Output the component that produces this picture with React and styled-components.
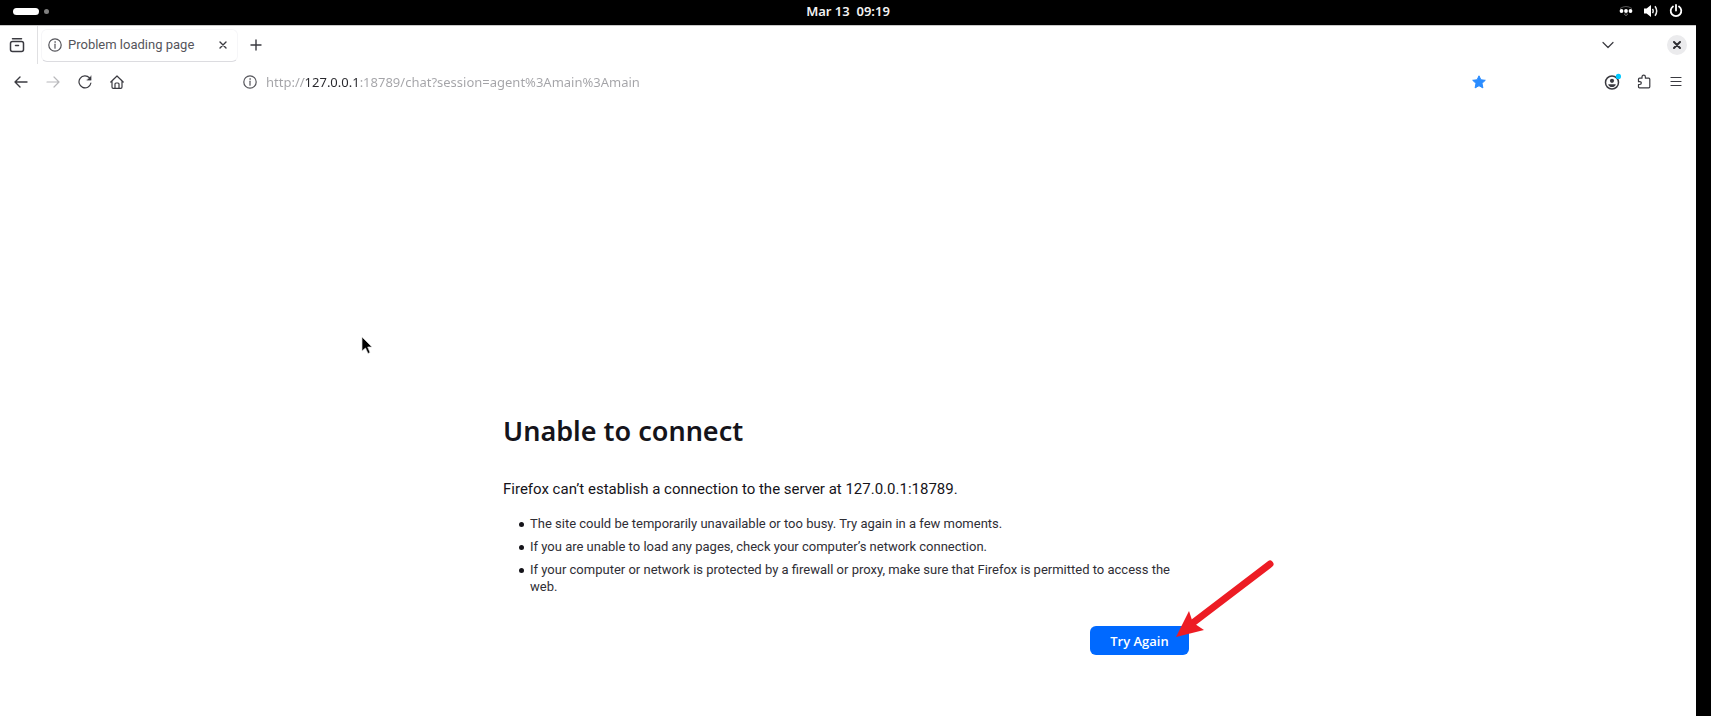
import styled, { createGlobalStyle } from "styled-components";

const GlobalStyle = createGlobalStyle`
  * {
    box-sizing: border-box;
  }

  html,
  body,
  #root {
    height: 100%;
  }

  body {
    margin: 0;
    background: #000;
    color: #15141a;
    font-family: Roboto, "Noto Sans", sans-serif;
    overflow: hidden;
  }
`;

const Desktop = styled.div`
  display: flex;
  flex-direction: column;
  min-height: 100%;
`;

const TopBar = styled.header`
  display: grid;
  grid-template-columns: 1fr auto 1fr;
  align-items: center;
  height: 25px;
  padding: 0 28px 3px 13px;
  background: #000;
  color: #f2f2f2;
`;

const Workspaces = styled.div`
  display: flex;
  align-items: center;
  gap: 5px;
`;

const Workspace = styled.button`
  width: ${({ $active }) => ($active ? "26px" : "5px")};
  height: ${({ $active }) => ($active ? "7px" : "5px")};
  padding: 0;
  border: none;
  border-radius: 4px;
  background: ${({ $active }) => ($active ? "#fff" : "#808080")};
`;

const Clock = styled.time`
  font-family: "Noto Sans", sans-serif;
  font-size: 13px;
  font-weight: 600;
  line-height: 18px;
  white-space: pre;
`;

const Tray = styled.div`
  display: flex;
  align-items: center;
  justify-content: flex-end;
  gap: 10px;

  svg {
    display: block;
  }
`;

const BrowserWindow = styled.div`
  display: flex;
  flex-direction: column;
  flex: 1;
  margin-right: 15px;
  border-top: 1px solid #c8c8c8;
  background: #fff;
`;

const TabStrip = styled.div`
  display: flex;
  align-items: center;
  height: 38px;
  padding-right: 9px;
`;

const IconButton = styled.button`
  display: flex;
  align-items: center;
  justify-content: center;
  flex: none;
  width: ${({ $width }) => $width || "32px"};
  height: 32px;
  padding: 0;
  border: none;
  background: transparent;
  color: ${({ $muted }) => ($muted ? "#b8b8bb" : "#3a3a40")};
`;

const Divider = styled.div`
  width: 1px;
  height: 100%;
  margin: 0 3px 0 3px;
  background: #e0e0e2;
`;

const Tab = styled.div`
  display: flex;
  align-items: center;
  gap: 6px;
  width: 197px;
  height: 33px;
  margin-right: 2px;
  padding-left: 6px;
  border: 1px solid #f6f6f8;
  border-bottom-color: #dcdce0;
  border-radius: 6px;
  color: #55555b;
`;

const TabTitle = styled.span`
  flex: 1;
  font-size: 13px;
  line-height: 18px;
  white-space: nowrap;
`;

const Spacer = styled.div`
  flex: 1;
`;

const CloseWindow = styled.button`
  display: flex;
  align-items: center;
  justify-content: center;
  width: 20px;
  height: 20px;
  margin-left: 43px;
  padding: 0;
  border: none;
  border-radius: 50%;
  background: #ebebed;
  color: #2e2e33;
`;

const Toolbar = styled.div`
  display: flex;
  align-items: center;
  height: 36px;
  padding: 0 4px 0 5px;
`;

const AddressBar = styled.div`
  display: flex;
  align-items: center;
  flex: 1;
  gap: 9px;
  margin: 0 110px;
  color: #55555b;

  svg {
    flex: none;
  }
`;

/* the host part of the address is darker than the rest */
const AddressInput = styled.input`
  flex: 1;
  min-width: 0;
  height: 30px;
  padding: 0;
  border: none;
  outline: none;
  background: linear-gradient(
    to right,
    #a3a3a7 38px,
    #27272c 38px,
    #27272c 91px,
    #a3a3a7 91px
  );
  background-clip: text;
  color: transparent;
  font-family: "Noto Sans", sans-serif;
  font-size: 13px;
`;

const Page = styled.main`
  flex: 1;
  width: 690px;
  max-width: 100%;
  margin: 0 auto;
  padding: 309px 4px 0 0;
`;

const Title = styled.h1`
  margin: 0;
  font-family: "Noto Sans", sans-serif;
  font-size: 27px;
  font-weight: 600;
  line-height: 44px;
`;

const Summary = styled.p`
  margin: 25px 0 15px;
  font-size: 15px;
  line-height: 22px;
`;

const Hints = styled.ul`
  margin: 0;
  padding-left: 16px;
  list-style: none;
  font-size: 13px;
  line-height: 17px;
`;

const Hint = styled.li`
  display: flex;
  gap: 6px;
  margin-bottom: 6px;
  color: #2f2e35;

  &::before {
    content: "";
    flex: none;
    width: 5px;
    height: 5px;
    margin-top: 7px;
    border-radius: 50%;
    background: #15141a;
  }
`;

const Actions = styled.div`
  display: flex;
  justify-content: flex-end;
  margin-top: 31px;
`;

const TryAgain = styled.button`
  position: relative;
  width: 99px;
  height: 29px;
  padding: 0;
  border: none;
  border-radius: 6px;
  background: #0069ff;
  color: #fff;
  font-family: "Open Sans", sans-serif;
  font-size: 13px;
  font-weight: 600;
  line-height: 20px;
`;

/* lies over the button and the page around it */
const Arrow = styled.svg`
  position: absolute;
  left: 84px;
  bottom: 15px;
  pointer-events: none;
`;

const Pointer = styled.svg`
  position: absolute;
  left: 361px;
  top: 336px;
  pointer-events: none;
`;

const line = {
  fill: "none",
  stroke: "currentColor",
  strokeWidth: 1.2,
  strokeLinecap: "round",
  strokeLinejoin: "round",
};

function InfoIcon() {
  return (
    <svg width="14" height="14" viewBox="0 0 14 14" {...line}>
      <circle cx="7" cy="7" r="6.2" />
      <path d="M7 6.2v4" />
      <circle cx="7" cy="4" r=".4" fill="currentColor" strokeWidth=".6" />
    </svg>
  );
}

function CrossIcon({ size, weight }) {
  return (
    <svg width={size} height={size} viewBox="0 0 8 8" {...line} strokeWidth={weight}>
      <path d="M1 1l6 6M7 1l-6 6" />
    </svg>
  );
}

function SystemTray() {
  return (
    <Tray>
      <svg width="14" height="14" viewBox="0 0 14 14">
        <path d="M1 4.5Q7 0.5 13 4.5M5 10h4l-2 2z" fill="none" stroke="#555" />
        <circle cx="2.5" cy="7" r="1.9" fill="#fff" />
        <circle cx="7" cy="7" r="1.9" fill="#fff" />
        <circle cx="11.5" cy="7" r="1.9" fill="#fff" />
      </svg>
      <svg width="16" height="14" viewBox="0 0 16 14">
        <path d="M1 4.5h2.6L8 1v12L3.600 9.500H1z" fill="#fff" />
        <path
          d="M9.5 4.8q1.4 2.2 0 4.4M12 2.3q3.4 4.7 0 9.4"
          fill="none"
          stroke="#eee"
          strokeWidth="1.5"
        />
      </svg>
      <svg width="14" height="14" viewBox="0 0 14 14" fill="none" stroke="#fff" strokeWidth="1.8">
        <path d="M4 2.4A5.3 5.3 0 1 0 10 2.4M7 1v5.5" strokeLinecap="round" />
      </svg>
    </Tray>
  );
}

function Tabs() {
  return (
    <TabStrip>
      <IconButton $width="34px" aria-label="Firefox View">
        <svg width="16" height="16" viewBox="0 0 16 16" {...line} strokeWidth="1.5">
          <rect x="1.5" y="4.5" width="13" height="10" rx="2" />
          <path d="M3.5 1.7h9M6.500 8.500h3" />
        </svg>
      </IconButton>
      <Divider />
      <Tab>
        <InfoIcon />
        <TabTitle>Problem loading page</TabTitle>
        <IconButton $width="28px" aria-label="Close tab">
          <CrossIcon size={8} weight={1.4} />
        </IconButton>
      </Tab>
      <IconButton aria-label="New tab">
        <svg width="12" height="12" viewBox="0 0 12 12" {...line} strokeWidth="1.4">
          <path d="M6 1v10M1 6h10" />
        </svg>
      </IconButton>
      <Spacer />
      <IconButton aria-label="List all tabs">
        <svg width="12" height="12" viewBox="0 0 12 12" {...line}>
          <path d="M1 3.5l5 5 5-5" />
        </svg>
      </IconButton>
      <CloseWindow aria-label="Close window">
        <CrossIcon size={8} weight={2} />
      </CloseWindow>
    </TabStrip>
  );
}

function Navigation() {
  return (
    <Toolbar>
      <IconButton aria-label="Back">
        <svg width="14" height="14" viewBox="0 0 14 14" {...line} strokeWidth="1.4">
          <path d="M13 7H1M6 2L1 7l5 5" />
        </svg>
      </IconButton>
      <IconButton $muted aria-label="Forward">
        <svg width="14" height="14" viewBox="0 0 14 14" {...line}>
          <path d="M1 7h12M8 2l5 5-5 5" />
        </svg>
      </IconButton>
      <IconButton aria-label="Reload">
        <svg width="14" height="14" viewBox="0 0 14 14" {...line}>
          <path d="M12.9 8A6 6 0 1 1 11.500 2.900" />
          <path d="M13.2 .9v4.3H8.900z" fill="currentColor" strokeWidth=".3" />
        </svg>
      </IconButton>
      <IconButton aria-label="Home">
        <svg width="14" height="14" viewBox="0 0 14 14" {...line}>
          <path d="M.8 7L7 1l6.2 6M2 6v6q0 1.3 1.3 1.3h7.4Q12 13.300 12 12V6" />
          <path d="M5 13V9q0-1 1-1h2q1 0 1 1v4" />
        </svg>
      </IconButton>
      <AddressBar>
        <InfoIcon />
        <AddressInput
          aria-label="Address"
          spellCheck={false}
          defaultValue="http://127.0.0.1:18789/chat?session=agent%3Amain%3Amain"
        />
        <svg width="14" height="14" viewBox="0 0 14 14" fill="#2a8cff">
          <path
            d="M7 .8l1.9 4 4.4.5-3.3 3 .9 4.6L7 10.700l-3.900 2.200.9-4.600-3.300-3 4.400-.5z"
            stroke="#2a8cff"
            strokeLinejoin="round"
          />
        </svg>
      </AddressBar>
      <IconButton aria-label="Account">
        <svg width="18" height="18" viewBox="0 0 18 18" {...line}>
          <circle cx="9" cy="9.5" r="6.5" strokeWidth="1.5" />
          <circle cx="9" cy="7.8" r="2.1" fill="currentColor" stroke="none" />
          <path d="M5.2 11.3h7.6q-.7 2.8-3.8 2.8t-3.8-2.8z" fill="currentColor" stroke="none" />
          <circle cx="15.4" cy="3.4" r="2.6" fill="#00c8ff" stroke="none" />
        </svg>
      </IconButton>
      <IconButton aria-label="Extensions">
        <svg width="14" height="16" viewBox="0 0 14 16" {...line}>
          <path d="M1.5 7V5.200q0-1 1-1H5V3q0-1.800 1.700-1.800T8.400 3v1.200h3.400q1 0 1 1v7.600q0 1-1 1H2.500q-1 0-1-1v-2.300h1.300q1.500 0 1.500-1.400T2.800 7.700H1.500z" />
        </svg>
      </IconButton>
      <IconButton aria-label="Menu">
        <svg width="12" height="12" viewBox="0 0 12 12" {...line}>
          <path d="M1 1.5h10M1 5.5h10M1 9.5h10" />
        </svg>
      </IconButton>
    </Toolbar>
  );
}

export default function App() {
  return (
    <>
      <GlobalStyle />
      <Desktop>
        <TopBar>
          <Workspaces>
            <Workspace $active aria-label="Workspace 1" />
            <Workspace aria-label="Workspace 2" />
          </Workspaces>
          <Clock>Mar 13  09:19</Clock>
          <SystemTray />
        </TopBar>
        <BrowserWindow>
          <Tabs />
          <Navigation />
          <Page>
            <Title>Unable to connect</Title>
            <Summary>
              Firefox can’t establish a connection to the server at 127.0.0.1:18789.
            </Summary>
            <Hints>
              <Hint>
                The site could be temporarily unavailable or too busy. Try again in a few moments.
              </Hint>
              <Hint>
                If you are unable to load any pages, check your computer’s network connection.
              </Hint>
              <Hint>
                If your computer or network is protected by a firewall or proxy, make sure that
                Firefox is permitted to access the web.
              </Hint>
            </Hints>
            <Actions>
              <TryAgain>
                Try Again
                <Arrow width="102" height="82" viewBox="0 0 102 82" fill="#ed1c24">
                  <path d="M20 64L96 6" stroke="#ed1c24" strokeWidth="7" strokeLinecap="round" />
                  <path d="M2 79L15 53l3 9 3 4 9 6z" />
                </Arrow>
              </TryAgain>
            </Actions>
          </Page>
        </BrowserWindow>
      </Desktop>
      <Pointer width="12" height="19" viewBox="0 0 12 19">
        <path
          d="M1 1v14l3.5-3 2.5 5.5 2-1L6.700 11H11z"
          fill="#000"
          stroke="#ddd"
          strokeWidth=".7"
        />
      </Pointer>
    </>
  );
}
